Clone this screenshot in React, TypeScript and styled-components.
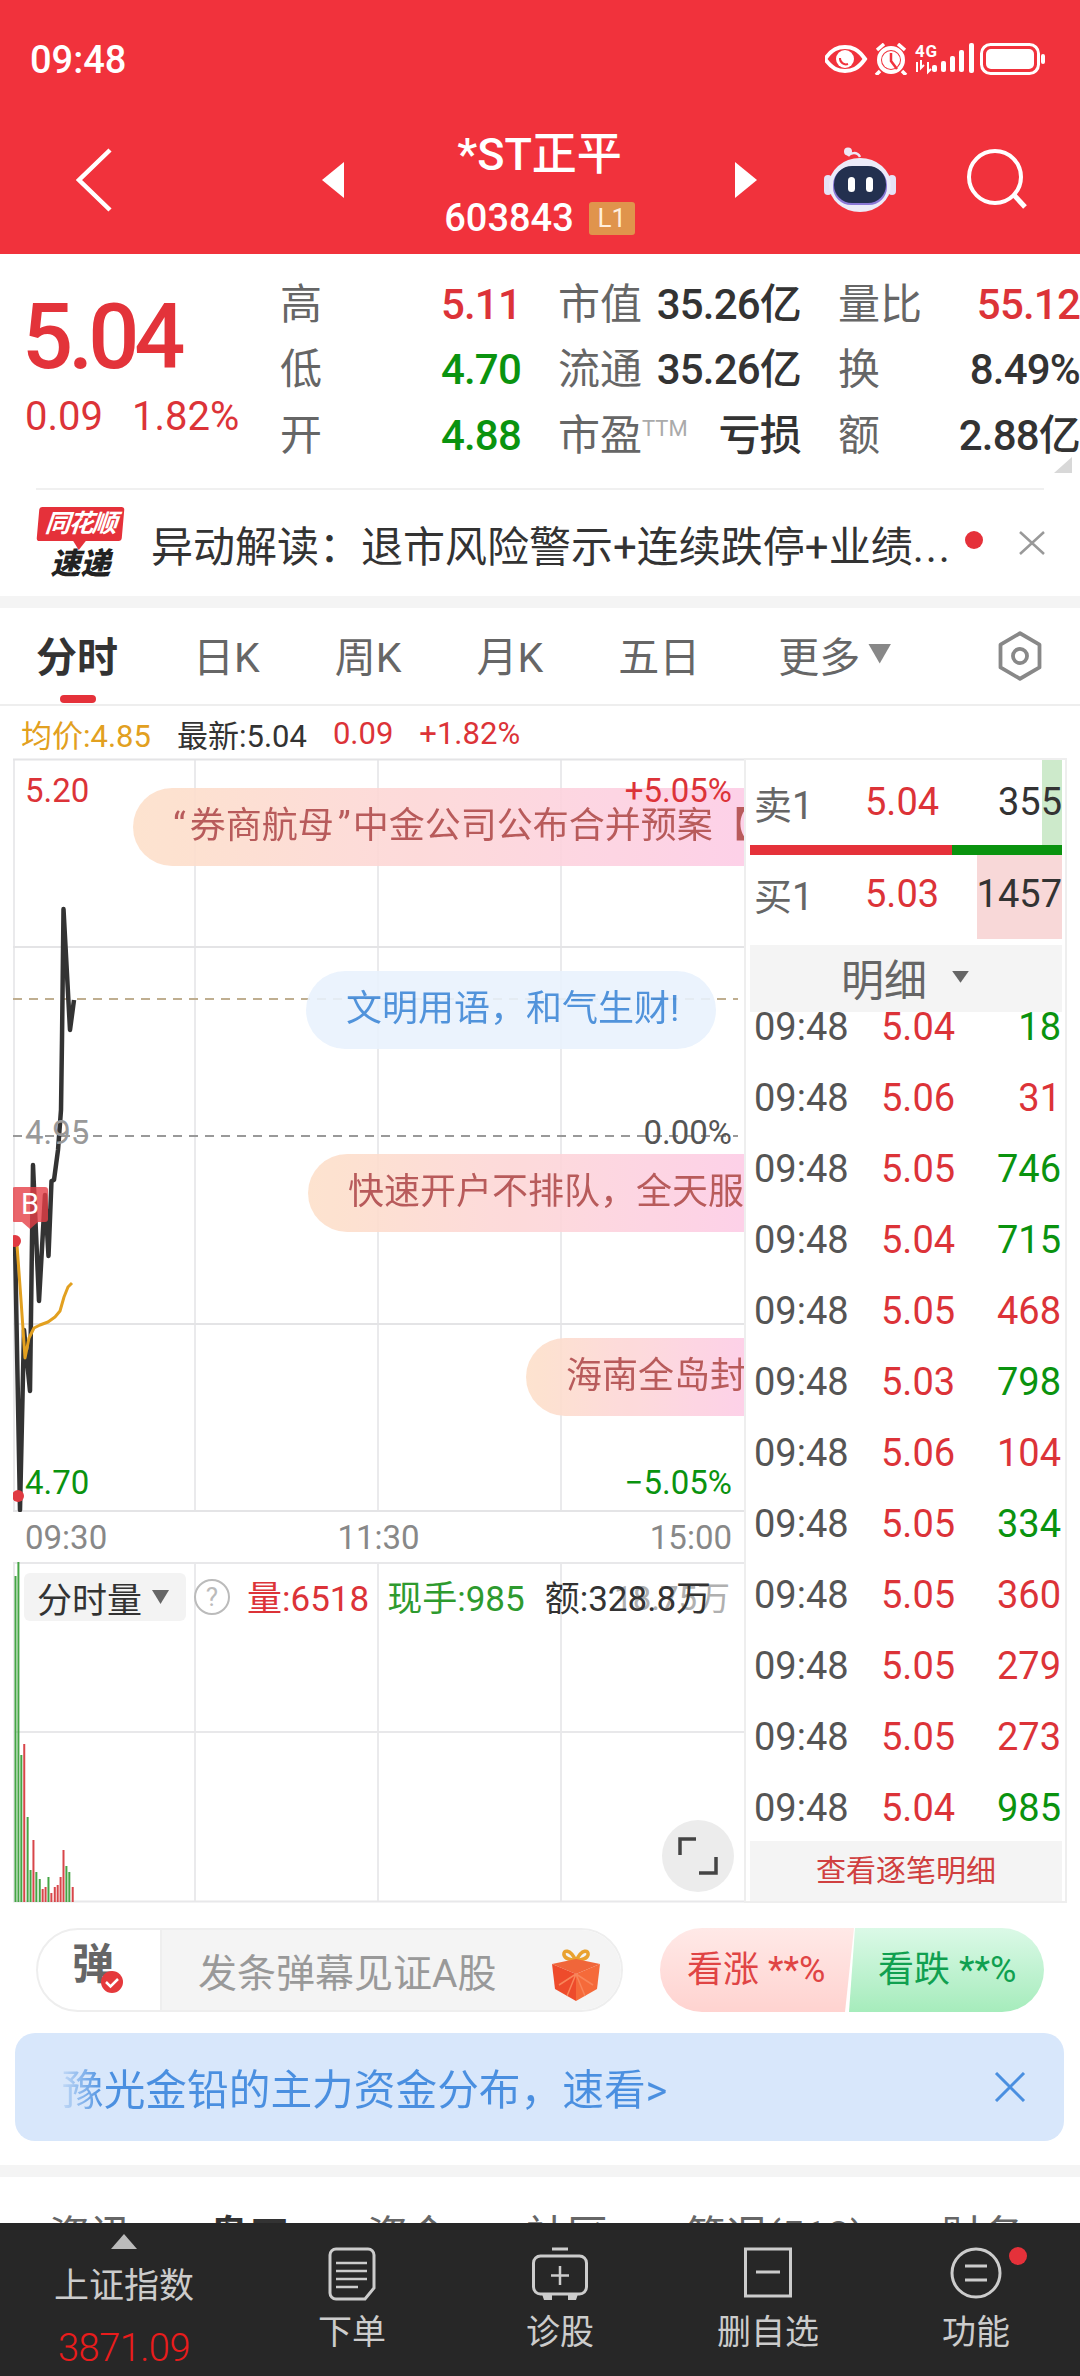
import React from 'react';
import styled, { createGlobalStyle } from 'styled-components';

const RED = '#dc3338';
const GREEN = '#0a930f';

const Global = createGlobalStyle`
  html, body { margin: 0; padding: 0; background: #fff; }
  body { font-family: Roboto, "Noto Sans CJK SC", sans-serif; }
  * { box-sizing: border-box; }
`;

const Page = styled.div`
  width: 1080px;
  height: 2376px;
  overflow: hidden;
  background: #fff;
  display: flex;
  flex-direction: column;
`;

/* ---------- header ---------- */
const Header = styled.header`
  height: 254px;
  background: #f1323c;
  color: #fff;
`;
const StatusBar = styled.div`
  height: 106px;
  padding: 14px 35px 0 30px;
  display: flex;
  align-items: flex-start;
  justify-content: space-between;
`;
const Clock = styled.span`
  height: 92px;
  line-height: 92px;
  font-size: 38px;
  font-weight: 500;
`;
const StatusIcons = styled.svg`
  margin-top: 29px;
`;
const Nav = styled.nav`
  height: 148px;
  display: flex;
  align-items: center;
`;
const BackSlot = styled.div`
  width: 322px;
  padding-left: 76px;
  display: flex;
`;
const TitleBox = styled.div`
  width: 391px;
  padding-top: 13px;
  display: flex;
  flex-direction: column;
  align-items: center;
  gap: 17px;
`;
const StockName = styled.div`
  font-size: 45px;
  line-height: 46px;
  font-weight: 500;
`;
const CodeLine = styled.div`
  height: 46px;
  display: flex;
  align-items: center;
  gap: 15px;
  font-size: 38px;
  font-weight: 500;
`;
const LevelBadge = styled.span`
  width: 46px;
  height: 33px;
  line-height: 33px;
  border-radius: 3px;
  background: #e0944c;
  color: #ffeedd;
  font-size: 26px;
  font-weight: 400;
  text-align: center;
`;
const NavArrow = styled.span<{ $dir: 'left' | 'right' }>`
  width: 22px;
  height: 36px;
  background: #fff;
  clip-path: ${(p) =>
    p.$dir === 'left'
      ? 'polygon(100% 0, 100% 100%, 0 50%)'
      : 'polygon(0 0, 100% 50%, 0 100%)'};
`;
const RobotIcon = styled.svg`
  margin-left: 67px;
`;
const SearchIcon = styled.svg`
  margin-left: 70px;
`;

/* ---------- quote ---------- */
const Quote = styled.section`
  position: relative;
  height: 234px;
  display: flex;
`;
const PriceCol = styled.div`
  width: 281px;
  padding: 44px 0 0 22px;
`;
const BigPrice = styled.div`
  font-size: 90px;
  line-height: 80px;
  font-weight: 500;
  letter-spacing: -5px;
  color: #e3333a;
`;
const PriceDelta = styled.div`
  margin: 19px 0 0 3px;
  display: flex;
  gap: 29px;
  font-size: 40px;
  line-height: 40px;
  color: ${RED};
`;
const StatsGrid = styled.div`
  margin-top: 18px;
  display: grid;
  grid-template-columns: 241px 243px 242px;
  grid-auto-rows: 65.5px;
  column-gap: 37px;
`;
const Stat = styled.div`
  display: flex;
  align-items: center;
  justify-content: space-between;
  white-space: nowrap;
`;
const StatLabel = styled.span`
  font-size: 42px;
  color: #666;
  line-height: 1;
`;
const Sup = styled.sup`
  font-size: 22px;
  color: #aaa;
  vertical-align: 14px;
  line-height: 0;
`;
const StatValue = styled.span<{ $color?: string }>`
  font-size: 42px;
  line-height: 1;
  font-weight: 500;
  letter-spacing: -0.8px;
  color: ${(p) => p.$color || '#333'};
`;
const CornerMark = styled.span`
  position: absolute;
  left: 1054px;
  top: 203px;
  width: 18px;
  height: 16px;
  background: #d8d8d8;
  clip-path: polygon(100% 0, 100% 100%, 0 100%);
`;
const Divider = styled.div`
  height: 2px;
  margin: 0 36px;
  background: #f0f0f0;
`;

/* ---------- ticker ---------- */
const Ticker = styled.section`
  height: 106px;
  padding-left: 37px;
  display: flex;
  align-items: center;
`;
const BrandLogo = styled.div`
  width: 87px;
  height: 72px;
  margin-right: 27px;
  display: flex;
  flex-direction: column;
  align-items: center;
`;
const BrandTop = styled.div`
  position: relative;
  width: 85px;
  height: 34px;
  line-height: 33px;
  border-radius: 3px;
  background: #e5313a;
  color: #fff;
  font-size: 25px;
  font-weight: 700;
  font-style: italic;
  text-align: center;
  letter-spacing: -1.5px;
  transform: skewX(-5deg);
  &::after {
    content: '';
    position: absolute;
    left: 36px;
    bottom: -9px;
    width: 14px;
    height: 10px;
    background: #e5313a;
    clip-path: polygon(0 0, 100% 0, 50% 100%);
  }
`;
const BrandBottom = styled.div`
  margin-top: 8px;
  font-size: 30px;
  line-height: 30px;
  font-weight: 900;
  font-style: italic;
  color: #222;
`;
const TickerText = styled.div`
  width: 804px;
  font-size: 42px;
  color: #333;
  white-space: nowrap;
`;
const Ellipsis = styled.span`
  letter-spacing: 2px;
`;
const RedDot = styled.span`
  width: 18px;
  height: 18px;
  margin: -6px 36px 0 10px;
  border-radius: 50%;
  background: #e5313a;
`;

const SectionGap = styled.div`
  height: 12px;
  background: #f4f4f4;
`;

/* ---------- period tabs ---------- */
const PeriodTabs = styled.div`
  height: 98px;
  padding: 0 34px 5px 36px;
  border-bottom: 2px solid #eee;
  display: flex;
  align-items: center;
  gap: 75px;
`;
const PeriodTab = styled.span<{ $active?: boolean; $shift?: number }>`
  position: relative;
  display: flex;
  align-items: center;
  margin-left: ${(p) => p.$shift || 0}px;
  font-size: 41px;
  font-weight: ${(p) => (p.$active ? 700 : 400)};
  color: ${(p) => (p.$active ? '#333' : '#666')};
  ${(p) =>
    p.$active &&
    `&::after {
      content: '';
      position: absolute;
      left: 24px;
      top: 71px;
      width: 36px;
      height: 8px;
      border-radius: 4px;
      background: #e5313a;
    }`}
`;
const Caret = styled.i<{ $w: number; $h: number; $color: string; $up?: boolean }>`
  display: inline-block;
  width: ${(p) => p.$w}px;
  height: ${(p) => p.$h}px;
  background: ${(p) => p.$color};
  clip-path: ${(p) =>
    p.$up ? 'polygon(50% 0, 100% 100%, 0 100%)' : 'polygon(0 0, 100% 0, 50% 100%)'};
`;
const CaretGap = styled.span`
  display: inline-flex;
  margin-left: 8px;
`;
const HexIcon = styled.svg`
  margin: 5px 0 0 auto;
`;

const InfoRow = styled.div`
  height: 52px;
  padding: 2px 0 0 21px;
  display: flex;
  align-items: center;
  gap: 26px;
`;
const InfoItem = styled.span<{ $color: string }>`
  font-size: 31px;
  color: ${(p) => p.$color};
`;

/* ---------- market ---------- */
const Market = styled.section`
  height: 1145px;
  display: flex;
`;
const ChartCol = styled.div`
  width: 744px;
  padding-left: 13px;
  display: flex;
  flex-direction: column;
`;
const PriceChart = styled.div`
  position: relative;
  height: 754px;
  overflow: hidden;
`;
const ChartSvg = styled.svg`
  display: block;
`;
const ChartLabel = styled.span<{ $left?: number; $right?: number; $top: number; $color: string }>`
  position: absolute;
  top: ${(p) => p.$top}px;
  ${(p) => (p.$left !== undefined ? `left: ${p.$left}px;` : '')}
  ${(p) => (p.$right !== undefined ? `right: ${p.$right}px;` : '')}
  font-size: 33px;
  line-height: 36px;
  color: ${(p) => p.$color};
`;
const Danmaku = styled.div<{ $left: number; $top: number; $width: number; $blue?: boolean }>`
  position: absolute;
  left: ${(p) => p.$left}px;
  top: ${(p) => p.$top}px;
  width: ${(p) => p.$width}px;
  height: 78px;
  line-height: 76px;
  padding-left: 40px;
  overflow: hidden;
  white-space: nowrap;
  font-size: 36px;
  opacity: 0.9;
  color: ${(p) => (p.$blue ? '#3f88d8' : '#b14a4a')};
  background: ${(p) =>
    p.$blue ? '#e9f2fd' : 'linear-gradient(90deg, #fde0ca, #fdcbe9 110%)'};
  border-radius: ${(p) => (p.$blue ? '39px' : '39px 0 0 39px')};
`;
const QuoteMark = styled.span<{ $before: number; $after: number }>`
  margin: 0 ${(p) => p.$after}px 0 ${(p) => p.$before}px;
`;
const BuyFlag = styled.span`
  position: absolute;
  left: -1px;
  top: 429px;
  width: 36px;
  height: 35px;
  line-height: 35px;
  border-radius: 3px;
  background: rgba(229, 62, 70, 0.8);
  color: #fff;
  font-size: 29px;
  text-align: center;
  &::after {
    content: '';
    position: absolute;
    left: 10px;
    top: 35px;
    width: 16px;
    height: 7px;
    background: rgba(229, 62, 70, 0.8);
    clip-path: polygon(0 0, 100% 0, 50% 100%);
  }
`;
const TimeAxis = styled.div`
  height: 50px;
  padding: 0 12px;
  display: flex;
  align-items: center;
  justify-content: space-between;
  font-size: 33px;
  color: #888;
`;
const VolChart = styled.div`
  position: relative;
  height: 341px;
`;
const VolHeader = styled.div`
  position: absolute;
  left: 11px;
  top: 11px;
  right: 0;
  display: flex;
  align-items: center;
`;
const VolSelect = styled.span`
  width: 162px;
  height: 48px;
  padding-left: 13px;
  border-radius: 6px;
  background: #f3f3f3;
  display: flex;
  align-items: center;
  gap: 10px;
  font-size: 35px;
  color: #333;
`;
const HelpMark = styled.span`
  width: 36px;
  height: 36px;
  margin: 0 17px 0 8px;
  border-radius: 50%;
  border: 2px solid #bbb;
  color: #bbb;
  font-size: 26px;
  line-height: 32px;
  text-align: center;
`;
const VolValue = styled.span<{ $color: string; $gap: number }>`
  margin: -4px ${(p) => p.$gap}px 0 0;
  font-size: 35px;
  color: ${(p) => p.$color};
  white-space: nowrap;
`;
const VolScale = styled.span`
  position: absolute;
  right: 14px;
  top: 10px;
  font-size: 33px;
  color: #b0b0b0;
`;
const ExpandButton = styled.span`
  position: absolute;
  left: 649px;
  top: 258px;
  width: 72px;
  height: 72px;
  border-radius: 50%;
  background: #ececec;
  display: flex;
  align-items: center;
  justify-content: center;
`;

/* ---------- order book ---------- */
const BookCol = styled.aside`
  width: 323px;
  border: 2px solid #eee;
  padding: 0 3px 0 4px;
  display: flex;
  flex-direction: column;
`;
const DepthRow = styled.div<{ $lift?: number }>`
  position: relative;
  height: 85px;
  padding: 0 0 ${(p) => p.$lift || 0}px 4px;
  display: grid;
  grid-template-columns: 111px 1fr auto;
  align-items: center;
  font-size: 38px;
  color: #666;
`;
const DepthBar = styled.span<{ $green?: boolean }>`
  position: absolute;
  top: 0;
  right: 0;
  bottom: 0;
  background: ${(p) => (p.$green ? '#cdeacb' : '#f8d8d8')};
`;
const DepthPrice = styled.span`
  color: ${RED};
`;
const DepthQty = styled.span`
  position: relative;
  color: #333;
`;
const RatioBar = styled.div`
  height: 10px;
  display: flex;
  background: ${GREEN};
`;
const RatioBuy = styled.span`
  width: 202px;
  background: #e5313a;
`;
const DetailHead = styled.div`
  position: relative;
  z-index: 1;
  height: 67px;
  margin-top: 6px;
  padding: 0 0 4px 91px;
  background: #f4f4f4;
  display: flex;
  align-items: center;
  gap: 25px;
  font-size: 43px;
  color: #666;
`;
const DetailList = styled.div`
  margin-top: -21px;
`;
const DetailRow = styled.div`
  height: 71px;
  padding: 0 1px 0 4px;
  display: grid;
  grid-template-columns: 127px 1fr auto;
  align-items: center;
  font-size: 38px;
  color: #555;
`;
const DetailPrice = styled.span`
  color: ${RED};
`;
const DetailQty = styled.span<{ $up: boolean }>`
  color: ${(p) => (p.$up ? RED : GREEN)};
`;
const DetailMore = styled.div`
  height: 60px;
  margin-top: -2px;
  line-height: 60px;
  background: #f4f4f4;
  color: #d04040;
  font-size: 30px;
  text-align: center;
`;

/* ---------- actions ---------- */
const ActionRow = styled.section`
  height: 84px;
  margin: 25px 36px 0;
  display: flex;
  gap: 37px;
`;
const CommentPill = styled.div`
  width: 587px;
  border: 2px solid #eee;
  border-radius: 42px;
  overflow: hidden;
  display: flex;
`;
const DanmuSwitch = styled.div`
  position: relative;
  flex: none;
  width: 124px;
  padding-left: 34px;
  border-right: 2px solid #eee;
  line-height: 70px;
  font-size: 42px;
  font-weight: 700;
  color: #666;
`;
const CheckBadge = styled.svg`
  position: absolute;
  left: 62px;
  top: 40px;
`;
const CommentInput = styled.div`
  flex: 1;
  padding: 0 20px 0 36px;
  background: #f4f4f4;
  display: flex;
  align-items: center;
  justify-content: space-between;
  font-size: 39px;
  color: #999;
`;
const GiftIcon = styled.svg`
  margin-top: 10px;
`;
const VoteGroup = styled.div`
  width: 384px;
  display: flex;
`;
const BullVote = styled.div`
  width: 194px;
  padding-left: 27px;
  border-radius: 42px 0 0 42px;
  background: linear-gradient(#ffe9e7, #ffd3d0);
  clip-path: polygon(0 0, 100% 0, calc(100% - 9px) 100%, 0 100%);
  color: #e04444;
  font-size: 36px;
  line-height: 84px;
  white-space: nowrap;
`;
const BearVote = styled.div`
  width: 195px;
  margin-left: -5px;
  padding-left: 29px;
  border-radius: 0 42px 42px 0;
  background: linear-gradient(#dbf9e7, #a6ecbc);
  clip-path: polygon(6px 0, 100% 0, 100% 100%, 0 100%);
  color: #10a050;
  font-size: 36px;
  line-height: 84px;
  white-space: nowrap;
`;
const Banner = styled.section`
  height: 108px;
  margin: 21px 16px 0 15px;
  padding: 0 38px 0 47px;
  border-radius: 20px;
  background: #d8e7fb;
  display: flex;
  align-items: center;
  justify-content: space-between;
`;
const BannerText = styled.span`
  font-size: 41.7px;
  color: transparent;
  background: linear-gradient(90deg, rgba(70, 140, 224, 0.15), #4a8fe0 42px);
  -webkit-background-clip: text;
  background-clip: text;
`;
const BottomGap = styled.div`
  height: 12px;
  margin-top: 24px;
  background: #f4f4f4;
`;
const InfoTabs = styled.div`
  height: 46px;
  padding: 35px 0 0 49px;
  overflow: hidden;
  display: flex;
  gap: 77px;
`;
const InfoTab = styled.span<{ $active?: boolean }>`
  font-size: 41px;
  line-height: 48px;
  white-space: nowrap;
  font-weight: ${(p) => (p.$active ? 700 : 400)};
  color: ${(p) => (p.$active ? '#333' : '#666')};
`;

/* ---------- footer ---------- */
const Footer = styled.footer`
  height: 153px;
  background: #272727;
  display: grid;
  grid-template-columns: 248px repeat(4, 208px);
  color: #ccc;
`;
const IndexCell = styled.div`
  padding-top: 11px;
  display: flex;
  flex-direction: column;
  align-items: center;
`;
const IndexName = styled.div`
  margin-top: 16px;
  font-size: 35px;
  line-height: 44px;
`;
const IndexValue = styled.div`
  margin-top: 18px;
  font-size: 38px;
  line-height: 42px;
  font-weight: 300;
  letter-spacing: -0.5px;
  color: #ea1c1c;
`;
const FootItem = styled.div`
  position: relative;
  padding-top: 24px;
  display: flex;
  flex-direction: column;
  align-items: center;
`;
const FootIcon = styled.svg`
  display: block;
  flex: none;
`;
const FootLabel = styled.span`
  margin-top: 9px;
  font-size: 34px;
  line-height: 44px;
`;
const Notice = styled.span`
  position: absolute;
  left: 137px;
  top: 24px;
  width: 18px;
  height: 18px;
  border-radius: 50%;
  background: #e5313a;
`;

const details: [string, string, boolean][] = [
  ['5.04', '18', false],
  ['5.06', '31', true],
  ['5.05', '746', false],
  ['5.04', '715', false],
  ['5.05', '468', true],
  ['5.03', '798', false],
  ['5.06', '104', true],
  ['5.05', '334', false],
  ['5.05', '360', true],
  ['5.05', '279', true],
  ['5.05', '273', true],
  ['5.04', '985', false],
];

const priceLine =
  '15,1241 20,1510 24,1330 30,1391 33,1165 39,1301 45,1195 48.5,1256 51.5,1181 54,1180 58,1150 61,1110 62,1040 63.5,909 70,1030 74,1000';
const avgLine =
  '17,1245 21,1300 25,1358 29,1338 34,1328 40,1325 48,1322 55,1317 60,1311 64,1297 68,1287 72,1283';

const volBars: [number, number, boolean][] = [
  [32, 1576, false], [38, 1562, false], [44, 1755, false], [50, 1744, true], [57, 1817, false],
  [63, 1870, false], [69, 1840, true], [75, 1872, false], [82, 1879, false], [88, 1889, true],
  [94, 1887, true], [100, 1877, false], [106, 1893, true], [113, 1887, true], [119, 1885, true],
  [125, 1877, true], [131, 1850, true], [137, 1866, false], [143, 1872, false], [150, 1887, true],
];

const Robot = () => (
  <RobotIcon width="72" height="66" viewBox="0 0 72 66">
    <path d="M24 9c2-3 9-5 12 1" fill="none" stroke="#eee8f6" strokeWidth="2.5" />
    <circle cx="24" cy="4.5" r="4" fill="#eee8f6" />
    <rect x="0" y="28" width="8" height="20" rx="4" fill="#e6e2f6" />
    <rect x="64" y="28" width="8" height="20" rx="4" fill="#e6e2f6" />
    <ellipse cx="36" cy="38" rx="31" ry="27" fill="#ecebf8" />
    <rect x="9" y="20" width="54" height="38" rx="18" fill="#8a78d6" />
    <rect x="10" y="19" width="52" height="37" rx="18" fill="#23304f" />
    <rect x="24" y="30" width="7" height="15" rx="3.5" fill="#fff" />
    <rect x="42" y="30" width="7" height="15" rx="3.5" fill="#fff" />
  </RobotIcon>
);

const StatusGlyphs = () => (
  <StatusIcons width="220" height="32" viewBox="0 0 220 32" fill="#fff">
    <path
      d="M0 16C7 6 13 4 20 4s13 2 20 12c-7 10-13 12-20 12S7 26 0 16z"
      fill="none"
      stroke="#fff"
      strokeWidth="4"
    />
    <circle cx="20" cy="16" r="9" />
    <path d="M15 15a6 6 0 0 0 8 6 6 6 0 0 1-8-6z" fill="#f1323c" stroke="#f1323c" strokeWidth="2" />
    <circle cx="66" cy="17" r="12" fill="none" stroke="#fff" strokeWidth="4" />
    <circle cx="66" cy="17" r="9" />
    <path d="M66 10v8l6 8" fill="none" stroke="#f1323c" strokeWidth="2.5" />
    <path d="M52 7l7-6M80 7l-7-6M55 28l-4 4M77 28l4 4" stroke="#fff" strokeWidth="3.5" />
    <text x="90" y="14" fontFamily="Roboto" fontWeight="700" fontSize="17" fill="#fff" textLength="22">
      4G
    </text>
    <path d="M92 19v10M96 17v8l3-3M103 19v10l3-3" stroke="#fff" strokeWidth="2" fill="none" />
    <rect x="107" y="22" width="5" height="7" rx="2" />
    <rect x="116" y="18" width="5" height="11" rx="2" />
    <rect x="125" y="13" width="5" height="16" rx="2" />
    <rect x="134" y="7" width="5" height="22" rx="2" />
    <rect x="144" y="0" width="5" height="30" rx="2" />
    <rect x="156.500" y="1.500" width="57" height="29" rx="9" fill="none" stroke="#fff" strokeWidth="3" />
    <rect x="161" y="6" width="48" height="20" rx="5" />
    <rect x="216" y="11" width="4" height="10" rx="2" />
  </StatusIcons>
);

const Gift = () => (
  <GiftIcon width="50" height="52" viewBox="0 0 50 52">
    <path d="M25 12C19 -1 12 1 13 6c1 4 7 5 12 6zM25 12c6-13 13-11 12-6-1 4-7 5-12 6z" fill="none" stroke="#e9a22f" strokeWidth="3.500" />
    <path d="M1 15l24-5 24 5-24 10z" fill="#f0663a" />
    <path d="M1 15l24 10v27L4 40z" fill="#ee4b2b" />
    <path d="M49 15L25 25v27l21-12z" fill="#f56a3a" />
    <path d="M25 25l-9 22M25 25l9 22M25 25l-17 11M25 25l17 11" stroke="#f8855a" strokeWidth="1.500" />
  </GiftIcon>
);

export default function App() {
  return (
    <Page>
      <Global />
      <Header>
        <StatusBar>
          <Clock>09:48</Clock>
          <StatusGlyphs />
        </StatusBar>
        <Nav>
          <BackSlot>
            <svg width="36" height="66" viewBox="0 0 36 66">
              <path d="M34 3L3 33l31 30" fill="none" stroke="#fff" strokeWidth="4.500" />
            </svg>
          </BackSlot>
          <NavArrow $dir="left" />
          <TitleBox>
            <StockName>*ST正平</StockName>
            <CodeLine>
              603843
              <LevelBadge>L1</LevelBadge>
            </CodeLine>
          </TitleBox>
          <NavArrow $dir="right" />
          <Robot />
          <SearchIcon width="62" height="62" viewBox="0 0 62 62">
            <circle cx="29" cy="28" r="26" fill="none" stroke="#fff" strokeWidth="4" />
            <path d="M48 46l11 12" stroke="#fff" strokeWidth="5" />
          </SearchIcon>
        </Nav>
      </Header>

      <Quote>
        <PriceCol>
          <BigPrice>5.04</BigPrice>
          <PriceDelta>
            <span>0.09</span>
            <span>1.82%</span>
          </PriceDelta>
        </PriceCol>
        <StatsGrid>
          <Stat>
            <StatLabel>高</StatLabel>
            <StatValue $color={RED}>5.11</StatValue>
          </Stat>
          <Stat>
            <StatLabel>市值</StatLabel>
            <StatValue>35.26亿</StatValue>
          </Stat>
          <Stat>
            <StatLabel>量比</StatLabel>
            <StatValue $color={RED}>55.12</StatValue>
          </Stat>
          <Stat>
            <StatLabel>低</StatLabel>
            <StatValue $color={GREEN}>4.70</StatValue>
          </Stat>
          <Stat>
            <StatLabel>流通</StatLabel>
            <StatValue>35.26亿</StatValue>
          </Stat>
          <Stat>
            <StatLabel>换</StatLabel>
            <StatValue>8.49%</StatValue>
          </Stat>
          <Stat>
            <StatLabel>开</StatLabel>
            <StatValue $color={GREEN}>4.88</StatValue>
          </Stat>
          <Stat>
            <StatLabel>
              市盈<Sup>TTM</Sup>
            </StatLabel>
            <StatValue>亏损</StatValue>
          </Stat>
          <Stat>
            <StatLabel>额</StatLabel>
            <StatValue>2.88亿</StatValue>
          </Stat>
        </StatsGrid>
        <CornerMark />
      </Quote>
      <Divider />

      <Ticker>
        <BrandLogo>
          <BrandTop>同花顺</BrandTop>
          <BrandBottom>速递</BrandBottom>
        </BrandLogo>
        <TickerText>
          异动解读：退市风险警示+连续跌停+业绩<Ellipsis>...</Ellipsis>
        </TickerText>
        <RedDot />
        <svg width="26" height="24" viewBox="0 0 26 24">
          <path d="M1 1l24 22M25 1L1 23" stroke="#999" strokeWidth="2.500" />
        </svg>
      </Ticker>
      <SectionGap />

      <PeriodTabs>
        <PeriodTab $active>分时</PeriodTab>
        <PeriodTab>日K</PeriodTab>
        <PeriodTab>周K</PeriodTab>
        <PeriodTab>月K</PeriodTab>
        <PeriodTab>五日</PeriodTab>
        <PeriodTab $shift={3}>
          更多
          <CaretGap>
            <Caret $w={23} $h={20} $color="#888" />
          </CaretGap>
        </PeriodTab>
        <HexIcon width="52" height="52" viewBox="0 0 48 48">
          <path d="M24 3l18 10.500v21L24 45 6 34.500v-21z" fill="none" stroke="#888" strokeWidth="3.500" strokeLinejoin="round" />
          <circle cx="24" cy="24" r="6.500" fill="none" stroke="#888" strokeWidth="3.500" />
        </HexIcon>
      </PeriodTabs>

      <InfoRow>
        <InfoItem $color="#e2a020">均价:4.85</InfoItem>
        <InfoItem $color="#333">最新:5.04</InfoItem>
        <InfoItem $color={RED}>0.09</InfoItem>
        <InfoItem $color={RED}>+1.82%</InfoItem>
      </InfoRow>

      <Market>
        <ChartCol>
          <PriceChart>
            <ChartSvg width="731" height="754" viewBox="13 758 731 754">
              <path d="M195 759v753M378 759v753M561 759v753M14 759v753" stroke="#eaeaec" strokeWidth="2" fill="none" />
              <path d="M13 759.500h731M13 947h731M13 1324h731M13 1511h731" stroke="#e4e4e6" strokeWidth="2" fill="none" />
              <path d="M13 999h725" stroke="#bfae90" strokeWidth="2" strokeDasharray="9 7" fill="none" />
              <path d="M13 1136h725" stroke="#999" strokeWidth="2" strokeDasharray="9 7" fill="none" />
              <polyline points={priceLine} fill="none" stroke="#333" strokeWidth="4.500" strokeLinejoin="round" />
              <polyline points={avgLine} fill="none" stroke="#e2a020" strokeWidth="3" strokeLinejoin="round" />
              <circle cx="15" cy="1241" r="6" fill="#e03a42" />
              <circle cx="18" cy="1496" r="6" fill="#e03a42" />
            </ChartSvg>
            <BuyFlag>B</BuyFlag>
            <Danmaku $left={120} $top={30} $width={611}>
              <QuoteMark $before={0} $after={4}>“</QuoteMark>券商航母<QuoteMark $before={4} $after={2}>”</QuoteMark>中金公司公布合并预案【中金公司
            </Danmaku>
            <Danmaku $left={293} $top={213} $width={410} $blue>文明用语，和气生财!</Danmaku>
            <Danmaku $left={295} $top={396} $width={436}>快速开户不排队，全天服务</Danmaku>
            <Danmaku $left={513} $top={580} $width={218}>海南全岛封关</Danmaku>
            <ChartLabel $left={12} $top={15} $color={RED}>5.20</ChartLabel>
            <ChartLabel $right={12} $top={15} $color={RED}>+5.05%</ChartLabel>
            <ChartLabel $left={12} $top={357} $color="#999">4.95</ChartLabel>
            <ChartLabel $right={12} $top={357} $color="#555">0.00%</ChartLabel>
            <ChartLabel $left={12} $top={707} $color={GREEN}>4.70</ChartLabel>
            <ChartLabel $right={12} $top={707} $color={GREEN}>−5.05%</ChartLabel>
          </PriceChart>
          <TimeAxis>
            <span>09:30</span>
            <span>11:30</span>
            <span>15:00</span>
          </TimeAxis>
          <VolChart>
            <ChartSvg width="731" height="341" viewBox="13 1562 731 341">
              <path d="M195 1562v340M378 1562v340M561 1562v340M14 1562v340" stroke="#eaeaec" strokeWidth="2" fill="none" />
              <path d="M13 1563h731M13 1732h731M13 1901.500h731" stroke="#e8e8ea" strokeWidth="2" fill="none" />
              {volBars.map(([x, top, up]) => (
                <rect
                  key={x}
                  x={x / 2.063 - 1}
                  y={top}
                  width="2"
                  height={1902 - top}
                  fill={up ? '#d8464a' : '#45a545'}
                />
              ))}
            </ChartSvg>
            <VolScale>18.75万</VolScale>
            <VolHeader>
              <VolSelect>
                分时量
                <Caret $w={17} $h={14} $color="#666" />
              </VolSelect>
              <HelpMark>?</HelpMark>
              <VolValue $color={RED} $gap={18}>量:6518</VolValue>
              <VolValue $color="#2e9a2e" $gap={20}>现手:985</VolValue>
              <VolValue $color="#333" $gap={0}>额:328.8万</VolValue>
            </VolHeader>
            <ExpandButton>
              <svg width="40" height="38" viewBox="0 0 40 38">
                <path d="M2 18V2h16M38 20v16H21" fill="none" stroke="#444" strokeWidth="3.500" />
              </svg>
            </ExpandButton>
          </VolChart>
        </ChartCol>

        <BookCol>
          <DepthRow>
            <DepthBar $green style={{ width: 20 }} />
            <span>卖1</span>
            <DepthPrice>5.04</DepthPrice>
            <DepthQty>355</DepthQty>
          </DepthRow>
          <RatioBar>
            <RatioBuy />
          </RatioBar>
          <DepthRow $lift={6}>
            <DepthBar style={{ width: 85 }} />
            <span>买1</span>
            <DepthPrice>5.03</DepthPrice>
            <DepthQty>1457</DepthQty>
          </DepthRow>
          <DetailHead>
            明细
            <Caret $w={17} $h={12} $color="#666" />
          </DetailHead>
          <DetailList>
            {details.map(([price, qty, up], i) => (
              <DetailRow key={i}>
                <span>09:48</span>
                <DetailPrice>{price}</DetailPrice>
                <DetailQty $up={up}>{qty}</DetailQty>
              </DetailRow>
            ))}
          </DetailList>
          <DetailMore>查看逐笔明细</DetailMore>
        </BookCol>
      </Market>

      <ActionRow>
        <CommentPill>
          <DanmuSwitch>
            弹
            <CheckBadge width="24" height="24" viewBox="0 0 24 24">
              <circle cx="12" cy="12" r="11" fill="#e5393c" />
              <path d="M6 12l4.500 4.500L18 9" fill="none" stroke="#fff" strokeWidth="2.500" />
            </CheckBadge>
          </DanmuSwitch>
          <CommentInput>
            发条弹幕见证A股
            <Gift />
          </CommentInput>
        </CommentPill>
        <VoteGroup>
          <BullVote>看涨 **%</BullVote>
          <BearVote>看跌 **%</BearVote>
        </VoteGroup>
      </ActionRow>

      <Banner>
        <BannerText>豫光金铅的主力资金分布，速看&gt;</BannerText>
        <svg width="32" height="30" viewBox="0 0 32 30">
          <path d="M2 1l28 28M30 1L2 29" stroke="#4a8fe0" strokeWidth="3" />
        </svg>
      </Banner>
      <BottomGap />
      <InfoTabs>
        <InfoTab>资讯</InfoTab>
        <InfoTab $active>盘口</InfoTab>
        <InfoTab>资金</InfoTab>
        <InfoTab>社区</InfoTab>
        <InfoTab>简况(518)</InfoTab>
        <InfoTab>财务</InfoTab>
      </InfoTabs>

      <Footer>
        <IndexCell>
          <Caret $w={26} $h={15} $color="#bbb" $up />
          <IndexName>上证指数</IndexName>
          <IndexValue>3871.09</IndexValue>
        </IndexCell>
        <FootItem>
          <FootIcon width="48" height="54" viewBox="0 0 48 54">
            <path d="M8 2h32a6 6 0 0 1 6 6v33l-9 11H8a6 6 0 0 1-6-6V8a6 6 0 0 1 6-6z" fill="none" stroke="#ccc" strokeWidth="3" />
            <path d="M8 16h31M8 24h31M8 32h31M8 40h22" stroke="#ccc" strokeWidth="2.500" />
          </FootIcon>
          <FootLabel>下单</FootLabel>
        </FootItem>
        <FootItem>
          <FootIcon width="56" height="54" viewBox="0 0 56 54">
            <path d="M20 2h16" stroke="#ccc" strokeWidth="3" />
            <rect x="1.500" y="9" width="53" height="38" rx="7" fill="none" stroke="#ccc" strokeWidth="3" />
            <path d="M28 19v19M19 28.500h18" stroke="#ccc" strokeWidth="2.500" />
            <path d="M10 47h10v6H12zM36 47h10l-2 6h-8z" fill="#ccc" />
          </FootIcon>
          <FootLabel>诊股</FootLabel>
        </FootItem>
        <FootItem>
          <FootIcon width="48" height="54" viewBox="0 0 48 54">
            <rect x="1.500" y="2" width="45" height="47" fill="none" stroke="#ccc" strokeWidth="3" />
            <path d="M12 25h24" stroke="#ccc" strokeWidth="3" />
          </FootIcon>
          <FootLabel>删自选</FootLabel>
        </FootItem>
        <FootItem>
          <FootIcon width="52" height="54" viewBox="0 0 52 54">
            <circle cx="26" cy="26" r="24" fill="none" stroke="#ccc" strokeWidth="3" />
            <path d="M15 19h22M15 33h22" stroke="#ccc" strokeWidth="3" />
          </FootIcon>
          <FootLabel>功能</FootLabel>
          <Notice />
        </FootItem>
      </Footer>
    </Page>
  );
}
